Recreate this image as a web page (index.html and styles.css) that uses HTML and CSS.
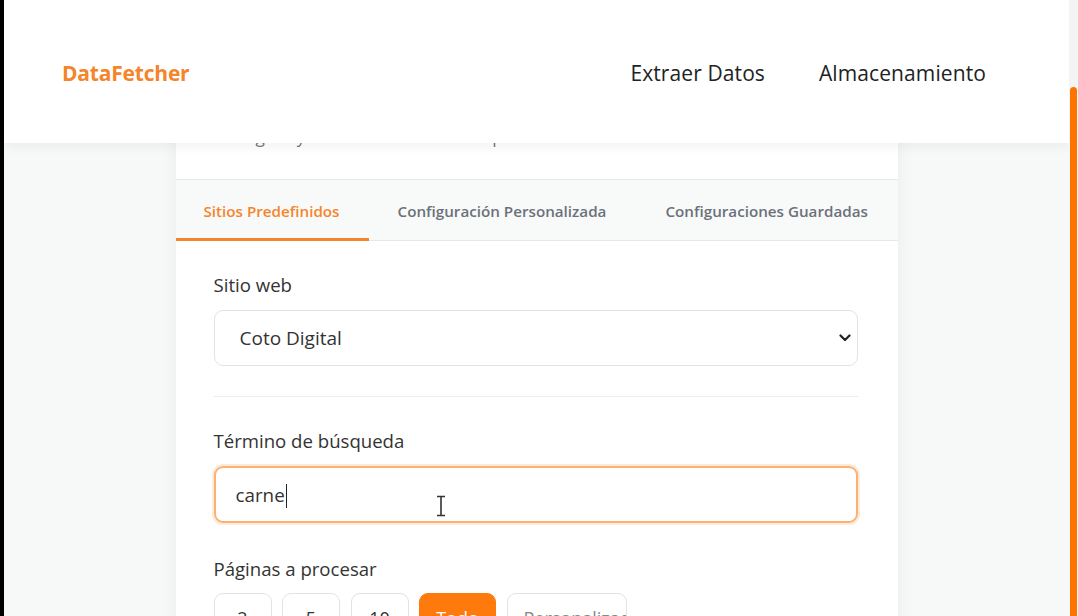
FILE: index.html
```html
<!DOCTYPE html>
<html lang="es">
<head>
<meta charset="utf-8">
<title>DataFetcher</title>
<link rel="stylesheet" href="styles.css">
</head>
<body>
<div class="frame">
  <div class="edge"></div>
  <div class="main">
    <header class="topbar">
      <div class="logo">DataFetcher</div>
      <nav class="nav">
        <a class="nav-link">Extraer Datos</a>
        <a class="nav-link">Almacenamiento</a>
      </nav>
    </header>
    <div class="content">
      <section class="card">
        <div class="card-head">
          <h2 class="card-title">Extracción de datos</h2>
          <p class="card-sub">Configura y extrae información de productos de sitios web.</p>
        </div>
        <div class="tabs">
          <div class="tab active">Sitios Predefinidos</div>
          <div class="tab">Configuración Personalizada</div>
          <div class="tab">Configuraciones Guardadas</div>
        </div>
        <div class="card-body">
          <div class="field">
            <div class="label">Sitio web</div>
            <div class="select">
              <span>Coto Digital</span>
              <svg class="chev" width="12" height="8" viewBox="0 0 12 8"><path d="M1.5 1.5 L6 6 L10.5 1.5" fill="none" stroke="#222" stroke-width="2.2" stroke-linecap="round" stroke-linejoin="round"/></svg>
            </div>
          </div>
          <div class="divider"></div>
          <div class="field">
            <div class="label">Término de búsqueda</div>
            <div class="input focused">
              <span>carne</span><span class="caret"></span>
              <svg class="ibeam" width="10" height="22" viewBox="0 0 10 22"><path d="M1 1.5 H9 M1 20.5 H9 M5 1.5 V20.5" fill="none" stroke="#333" stroke-width="1.6"/></svg>
            </div>
          </div>
          <div class="field pages">
            <div class="label">Páginas a procesar</div>
            <div class="page-opts">
              <div class="opt">2</div>
              <div class="opt">5</div>
              <div class="opt">10</div>
              <div class="opt selected">Todo</div>
              <div class="opt custom">Personalizado</div>
            </div>
          </div>
        </div>
      </section>
    </div>
  </div>
  <div class="scrollbar"><div class="thumb"></div></div>
</div>
</body>
</html>
```

FILE: styles.css
```css
* { box-sizing: border-box; }
html, body { margin: 0; padding: 0; height: 100%; overflow: hidden; }
body {
  font-family: "Open Sans", "Noto Sans", sans-serif;
  background: #f7f8f8;
  color: #333;
}
.frame { display: flex; height: 616px; }
.edge { width: 4px; background: #000; flex: none; }
.main { flex: 1; position: relative; overflow: hidden; }
.scrollbar { width: 9px; flex: none; background: #f3f4f4; padding-top: 87px; padding-left: 1px; padding-right: 1px; }
.thumb { height: 100%; background: #ff7300; border-radius: 4px 4px 0 0; }

.topbar {
  position: absolute;
  top: 0; left: 0; right: 0;
  height: 143px;
  background: #fff;
  box-shadow: 0 3px 12px rgba(0,0,0,0.06);
  display: flex;
  align-items: center;
  justify-content: space-between;
  padding: 2px 83px 0 58px;
  z-index: 5;
}
.logo { color: #f5852a; font-weight: 700; font-size: 21px; letter-spacing: -0.2px; }
.nav { display: flex; gap: 54px; }
.nav-link { color: #222; font-size: 21px; font-weight: 500; letter-spacing: 0.1px; }

.content { padding-top: 51px; display: flex; justify-content: center; }
.card {
  width: 722px;
  background: #fff;
  box-shadow: 0 0 18px rgba(0,0,0,0.06);
  border-radius: 8px;
}
.card-head { padding: 30px 38px 30px; }
.card-title { margin: 0 0 8px; font-size: 26px; line-height: 36px; font-weight: 700; color: #222; }
.card-sub { margin: 0; font-size: 17.3px; line-height: 24px; color: #777; }

.tabs {
  display: flex;
  background: #f8f9f9;
  border-top: 1px solid #e6e8ea;
  border-bottom: 1px solid #e6e8ea;
  height: 62px;
}
.tab {
  padding: 0 29px 0 28px;
  display: flex;
  align-items: center;
  font-size: 15.2px;
  font-weight: 600;
  color: #6b717a;
  margin-bottom: -1px;
  border-bottom: 3px solid transparent;
  padding-top: 3px;
  white-space: nowrap;
}
.tab + .tab { padding-left: 29px; padding-right: 30px; }
.tab.active { color: #f5852a; border-bottom-color: #f5852a; }

.card-body { padding: 31px 40px 40px 38px; }
.label { font-size: 18.6px; line-height: 26px; font-weight: 500; color: #333; margin-bottom: 12px; }
.select {
  height: 56px;
  border: 1px solid #e3e3e6;
  border-radius: 9px;
  display: flex;
  align-items: center;
  justify-content: space-between;
  padding: 0 6px 0 25px;
  font-size: 19px;
  color: #333;
}
.divider { height: 1px; background: #ebebf2; margin: 30px 0 31px; }
.input {
  position: relative;
  height: 57px;
  border-radius: 9px;
  display: flex;
  align-items: center;
  padding: 0 20px;
  font-size: 18.8px;
  color: #333;
}
.input.focused { border: 2px solid #fdb06f; box-shadow: 0 0 0 2px rgba(253,176,111,0.25); }
.caret { display: inline-block; width: 1.5px; height: 24px; background: #222; margin-left: 1px; margin-top: 3px; }
.ibeam { position: absolute; left: 220px; top: 27px; }
.pages { margin-top: 33px; }
.pages .label { margin-bottom: 11px; }
.page-opts { display: flex; gap: 10.5px; }
.opt {
  height: 48px;
  width: 58px;
  flex: none;
  border: 1px solid #e3e3e6;
  border-radius: 9px;
  display: flex;
  justify-content: center;
  padding-top: 12px;
  font-size: 18px;
  color: #333;
}
.opt.selected { background: #ff7a0c; border-color: #ff7a0c; color: #fff; width: 77px; }
.opt.custom { width: 120px; justify-content: flex-start; padding-left: 16px; color: #888; overflow: hidden; white-space: nowrap; }
```
